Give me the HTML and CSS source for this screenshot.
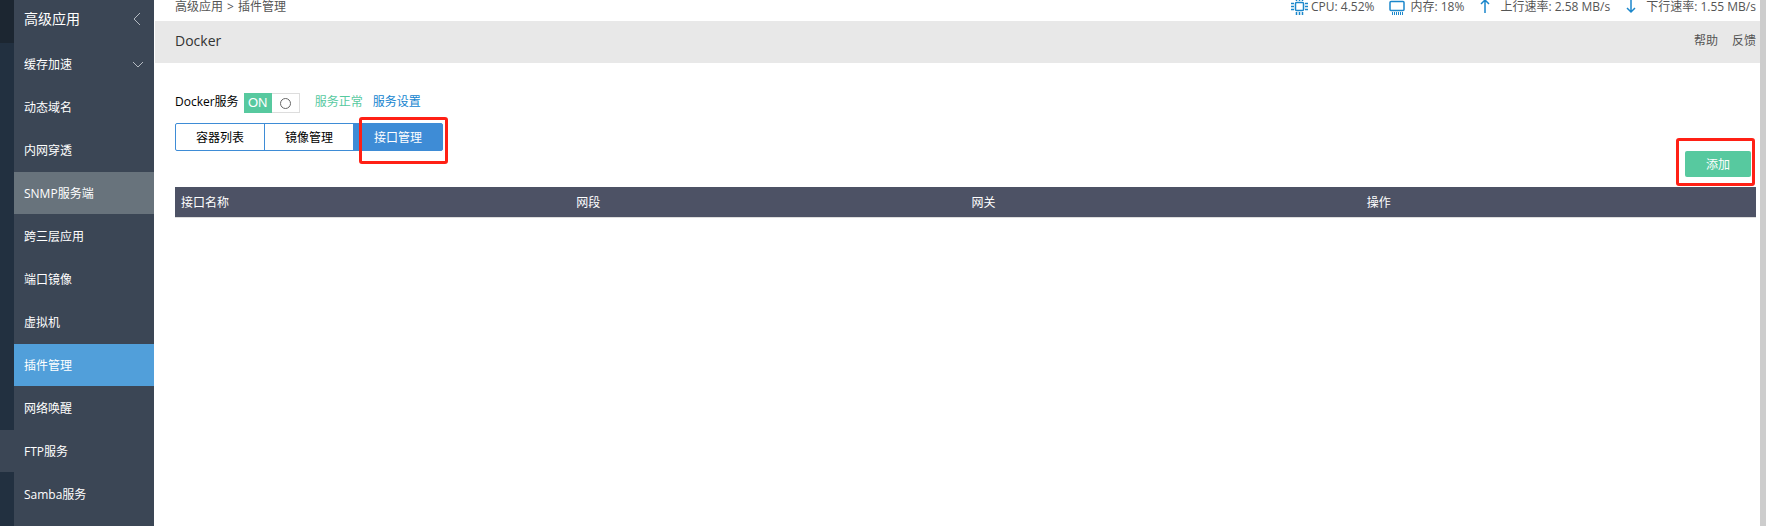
FILE: index.html
```html
<!DOCTYPE html>
<html lang="zh-CN">
<head>
<meta charset="utf-8">
<title>Docker - 插件管理</title>
<link rel="stylesheet" href="styles.css">
</head>
<body>
<div class="app">
  <div class="rail">
    <span class="rail-top"></span>
    <span class="rail-fill"></span>
    <span class="rail-current"></span>
    <span class="rail-rest"></span>
  </div>
  <nav class="menu">
    <div class="menu-title">
      <span>高级应用</span>
      <svg width="12" height="14" viewBox="0 0 12 14"><path d="M8 1 2 7l6 6"/></svg>
    </div>
    <a class="menu-item" href="#">缓存加速
      <svg width="12" height="8" viewBox="0 0 12 8"><path d="m1 1 5 5 5-5"/></svg>
    </a>
    <a class="menu-item" href="#">动态域名</a>
    <a class="menu-item" href="#">内网穿透</a>
    <a class="menu-item hovered" href="#">SNMP服务端</a>
    <a class="menu-item" href="#">跨三层应用</a>
    <a class="menu-item" href="#">端口镜像</a>
    <a class="menu-item" href="#">虚拟机</a>
    <a class="menu-item active" href="#">插件管理</a>
    <a class="menu-item" href="#">网络唤醒</a>
    <a class="menu-item" href="#">FTP服务</a>
    <a class="menu-item" href="#">Samba服务</a>
  </nav>
  <main class="main">
    <div class="topbar">
      <div class="crumbs"><span>高级应用</span><span>&gt;</span><span>插件管理</span></div>
      <div class="stats">
        <span class="stat cpu">
          <svg width="17" height="18" viewBox="0 0 17 18"><rect x="4.5" y="4.5" width="8" height="8" rx="1"/><path d="M5.5 0v3M8.5 0v3M11.5 0v3M5.5 14v3M8.5 14v3M11.5 14v3M0 5.5h3M0 8.5h3M0 11.5h3M14 5.5h3M14 8.5h3M14 11.5h3"/></svg>
          CPU: 4.52%
        </span>
        <span class="stat mem">
          <svg width="16" height="18" viewBox="0 0 16 18"><rect x="1" y="3.5" width="14" height="9" rx="1"/><path class="pins" d="M3.5 14v3M5.5 14v3M7.5 14v3M9.5 14v3M11.5 14v3M13.5 14v3"/></svg>
          内存: 18%
        </span>
        <span class="stat rate">
          <svg width="10" height="18" viewBox="0 0 10 18"><path d="M5 15V2M1 6l4-4 4 4"/></svg>
          上行速率: 2.58 MB/s
        </span>
        <span class="stat rate">
          <svg width="10" height="18" viewBox="0 0 10 18"><path d="M5 1v13M1 10l4 4 4-4"/></svg>
          下行速率: 1.55 MB/s
        </span>
      </div>
    </div>
    <header class="heading">
      <h1>Docker</h1>
      <div class="links"><a href="#">帮助</a><a href="#">反馈</a></div>
    </header>
    <section class="content">
      <div class="service">
        <span id="svc" class="label">Docker服务</span>
        <button class="toggle" type="button" role="switch" aria-checked="true" aria-labelledby="svc"><span class="on">ON</span><span class="off"><i></i></span></button>
        <span class="label ok">服务正常</span>
        <a class="label setting" href="#">服务设置</a>
      </div>
      <div class="tabs">
        <button type="button">容器列表</button>
        <button type="button">镜像管理</button>
        <div class="tab-slot"><button type="button" class="selected">接口管理</button><span class="mark mark-tab"></span></div>
      </div>
      <div class="actions">
        <div class="add-slot"><button type="button" class="add">添加</button><span class="mark mark-add"></span></div>
      </div>
      <table class="grid">
        <thead><tr><th>接口名称</th><th>网段</th><th>网关</th><th>操作</th></tr></thead>
      </table>
    </section>
  </main>
  <div class="scroll"></div>
</div>
</body>
</html>
```
FILE: styles.css
```css
* { box-sizing: border-box; }
body {
  margin: 0;
  font: 12px/18px "Open Sans", "Noto Sans CJK SC", sans-serif;
  color: #000;
  background: #fff;
  overflow: hidden;
}
a { color: inherit; text-decoration: none; }
button { font: inherit; padding: 0; cursor: pointer; }
svg { fill: none; flex: none; }
.app { display: flex; min-height: 100vh; }

.rail { width: 14px; flex: none; display: flex; flex-direction: column; background: #223040; }
.rail-top { height: 43px; background: #1c2631; }
.rail-fill { height: 387px; }
.rail-current { height: 42px; background: #3b4655; }
.rail-rest { flex: 1; }

.menu { width: 140px; flex: none; background: #3b4655; color: #fff; }
.menu-title, .menu-item {
  display: flex;
  align-items: center;
  justify-content: space-between;
  padding: 0 10px;
}
.menu-title { height: 43px; padding-bottom: 6px; font-size: 14px; }
.menu-item { height: 42px; margin-bottom: 1px; padding-top: 2px; }
.menu svg { stroke: #b4bac1; }
.hovered { background: #68737c; }
.active { background: #519fda; }

.main { flex: 1; min-width: 0; padding-left: 1px; }
.topbar { display: flex; justify-content: space-between; height: 21px; padding: 0 4px 0 20px; color: #555; }
.crumbs, .stats { height: 14px; display: flex; align-items: center; }
.crumbs { gap: 4px; }
.stat { display: flex; align-items: center; white-space: nowrap; }
.stat svg { stroke: #1b87cb; stroke-width: 2; }
.cpu svg, .mem svg { stroke-width: 1.5; }
.stat .pins { stroke-width: 1; }
.cpu { gap: 3px; margin-right: 15px; }
.mem { gap: 5px; margin-right: 16px; }
.rate { gap: 10px; }
.rate svg { stroke-width: 1.5; }
.rate + .rate { margin-left: 16px; }

.heading {
  display: flex;
  align-items: center;
  justify-content: space-between;
  height: 42px;
  padding: 0 4px 2px 20px;
  background: #e8e8e8;
}
.heading h1 { margin: 0; font-size: 14px; font-weight: 400; color: #333; }
.links { display: flex; gap: 14px; color: #555; }

.content { padding: 30px 4px 0 20px; }
.service { display: flex; align-items: center; height: 20px; }
.label { padding-bottom: 2px; }
.toggle {
  display: flex;
  width: 56px;
  height: 20px;
  margin: 0 15px 0 5px;
  border: 0;
  background: #fff;
}
.on { width: 28px; background: #57c99f; color: #fff; font: 13px/20px "Liberation Sans", sans-serif; }
.off { width: 28px; height: 20px; display: flex; align-items: center; justify-content: center; border: 1px solid #ddd; border-left: 0; }
.off i { width: 11px; height: 11px; border: 1px solid #666; border-radius: 50%; }
.ok { color: #57c99f; margin-right: 10px; }
.setting { color: #1484cf; }

.tabs { display: flex; margin-top: 10px; }
.tabs button {
  width: 90px;
  height: 28px;
  padding-top: 2px;
  background: #fff;
  border: 1px solid #3e8cd6;
  color: #000;
}
.tabs > button:first-child { border-radius: 2px 0 0 2px; }
.tabs > * + * { margin-left: -1px; }
.tabs .selected { background: #3e8cd6; color: #fff; border-radius: 0 2px 2px 0; }
.tab-slot, .add-slot { position: relative; }
.mark { position: absolute; border: 3px solid #ff2015; border-radius: 3px; pointer-events: none; }
.mark-tab { inset: -6px -5px -13px 6px; }
.mark-add { inset: -13px -4px -9px -9px; }

.actions { display: flex; justify-content: flex-end; padding: 0 5px 10px 0; }
.add { display: block; width: 66px; height: 26px; padding-top: 2px; border: 0; border-radius: 2px; background: #57c99f; color: #fff; }

.grid { width: 100%; border-collapse: collapse; table-layout: fixed; border-bottom: 1px solid #ddd; }
.grid th { height: 30px; padding: 2px 6px 0; text-align: left; font-weight: 400; color: #fff; background: #4d5265; }

.scroll { width: 6px; flex: none; background: #cdcdcd; }
```
